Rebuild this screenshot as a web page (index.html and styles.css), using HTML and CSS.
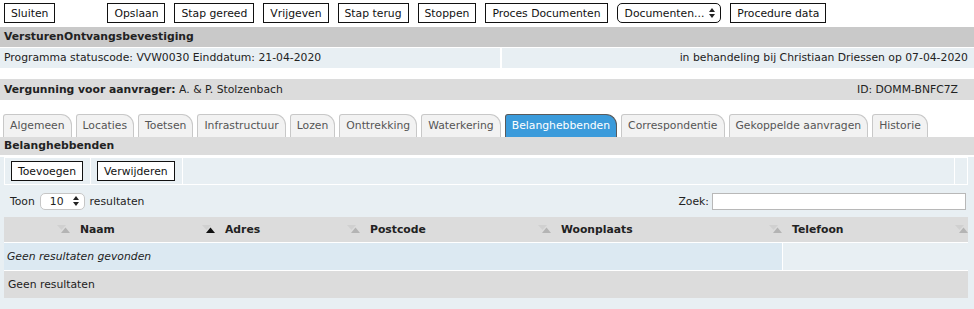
FILE: index.html
```html
<!DOCTYPE html>
<html>
<head>
<meta charset="utf-8">
<link rel="stylesheet" href="styles.css">
</head>
<body>
<div class="actions">
  <button class="btn">Sluiten</button>
  <div class="group">
    <button class="btn">Opslaan</button>
    <button class="btn">Stap gereed</button>
    <button class="btn">Vrijgeven</button>
    <button class="btn">Stap terug</button>
    <button class="btn">Stoppen</button>
    <button class="btn">Proces Documenten</button>
    <button class="btn select">Documenten... <svg class="updown" width="6" height="10" viewBox="0 0 6 10"><polygon points="0,4 6,4 3,0" fill="#222"/><polygon points="0,6 6,6 3,10" fill="#222"/></svg></button>
    <button class="btn">Procedure data</button>
  </div>
</div>

<div class="title-bar">VersturenOntvangsbevestiging</div>
<div class="status-row">
  <div class="status-left">Programma statuscode: VVW0030 Einddatum: 21-04-2020</div>
  <div class="status-right">in behandeling bij Christiaan Driessen op 07-04-2020</div>
</div>

<div class="applicant-bar">
  <div><b>Vergunning voor aanvrager:</b> A. &amp; P. Stolzenbach</div>
  <div class="applicant-id">ID: DOMM-BNFC7Z</div>
</div>

<div class="tabs">
  <div class="tab">Algemeen</div>
  <div class="tab">Locaties</div>
  <div class="tab">Toetsen</div>
  <div class="tab">Infrastructuur</div>
  <div class="tab">Lozen</div>
  <div class="tab">Onttrekking</div>
  <div class="tab">Waterkering</div>
  <div class="tab active">Belanghebbenden</div>
  <div class="tab">Correspondentie</div>
  <div class="tab">Gekoppelde aanvragen</div>
  <div class="tab">Historie</div>
</div>

<div class="section-bar">Belanghebbenden</div>

<div class="panel">
  <div class="panel-tools">
    <div class="tool-cell"><button class="btn">Toevoegen</button></div>
    <div class="tool-cell"><button class="btn">Verwijderen</button></div>
    <div class="tool-cell tool-fill"></div>
    <div class="tool-cell tool-end"></div>
  </div>

  <div class="table-controls">
    <div class="length">Toon <span class="len-select">10 <svg class="updown" width="6" height="10" viewBox="0 0 6 10"><polygon points="0,4 6,4 3,0" fill="#222"/><polygon points="0,6 6,6 3,10" fill="#222"/></svg></span> resultaten</div>
    <div class="search">Zoek: <span class="search-input"></span></div>
  </div>

  <table class="data">
    <thead>
      <tr>
        <th class="c0"><svg class="sort" width="13" height="8" viewBox="0 0 13 8"><polygon points="0,0 9,0 4.5,5" fill="#d0d0d0"/><polygon points="4,8 13,8 8.5,2.5" fill="#b4b4b4"/></svg></th>
        <th class="c1">Naam<svg class="sort" width="13" height="8" viewBox="0 0 13 8"><polygon points="0,0 9,0 4.5,5" fill="#d0d0d0"/><polygon points="4,8 13,8 8.5,2.5" fill="#111"/></svg></th>
        <th class="c2">Adres<svg class="sort" width="13" height="8" viewBox="0 0 13 8"><polygon points="0,0 9,0 4.5,5" fill="#d0d0d0"/><polygon points="4,8 13,8 8.5,2.5" fill="#b4b4b4"/></svg></th>
        <th class="c3">Postcode<svg class="sort" width="13" height="8" viewBox="0 0 13 8"><polygon points="0,0 9,0 4.5,5" fill="#d0d0d0"/><polygon points="4,8 13,8 8.5,2.5" fill="#b4b4b4"/></svg></th>
        <th class="c4">Woonplaats<svg class="sort" width="13" height="8" viewBox="0 0 13 8"><polygon points="0,0 9,0 4.5,5" fill="#d0d0d0"/><polygon points="4,8 13,8 8.5,2.5" fill="#b4b4b4"/></svg></th>
        <th class="c5">Telefoon<svg class="sort" width="13" height="8" viewBox="0 0 13 8"><polygon points="0,0 9,0 4.5,5" fill="#d0d0d0"/><polygon points="4,8 13,8 8.5,2.5" fill="#b4b4b4"/></svg></th>
      </tr>
    </thead>
    <tbody>
      <tr class="empty-row">
        <td colspan="5" class="empty">Geen resultaten gevonden</td>
        <td class="empty-side"></td>
      </tr>
      <tr class="info-row">
        <td colspan="6">Geen resultaten</td>
      </tr>
    </tbody>
  </table>
</div>
</body>
</html>
```

FILE: styles.css
```css
* { box-sizing: border-box; }
html, body { margin: 0; padding: 0; background: #fff; }
body {
  font-family: "DejaVu Sans", Verdana, sans-serif;
  font-size: 10.8px;
  color: #222;
  width: 974px;
}
.actions {
  display: flex;
  padding: 3px 4px 0;
}
.group {
  display: flex;
  gap: 9px;
  margin-left: 52px;
}
.btn {
  font: inherit;
  color: #111;
  background: #fff;
  border: 1px solid #111;
  border-radius: 0;
  height: 20px;
  padding: 0 6px;
  margin: 0;
  display: inline-flex;
  align-items: center;
}
.btn.select {
  border-radius: 5px;
  gap: 5px;
  padding: 0 5px 0 7px;
}
.updown { display: block; }
.title-bar {
  margin-top: 4px;
  height: 20px;
  line-height: 20px;
  background: #c9c9c9;
  font-weight: bold;
  padding: 0 4px;
  color: #222;
}
.status-row {
  display: flex;
  margin-top: 1px;
  height: 20px;
  line-height: 20px;
  background: #e8eff3;
}
.status-left {
  width: 502px;
  padding-left: 4px;
  border-right: 2px solid #fff;
}
.status-right {
  flex: 1;
  text-align: right;
  padding-right: 6px;
}
.applicant-bar {
  margin-top: 11px;
  height: 21px;
  background: #dcdcdc;
  display: flex;
  justify-content: space-between;
  align-items: center;
  padding: 0 16px 0 4px;
}
.tabs {
  display: flex;
  gap: 4px;
  padding: 13px 0 0 3px;
  height: 37px;
  align-items: flex-end;
}
.tab {
  height: 23px;
  line-height: 22px;
  padding: 0 6px;
  background: #f2f2f2;
  border: 1px solid #c8c8c8;
  border-bottom: none;
  border-radius: 3px 11px 0 0;
  color: #555;
}
.tab.active {
  background: #3b9bdb;
  border-color: #5a5a5a;
  color: #fff;
}
.section-bar {
  height: 18px;
  line-height: 18px;
  background: #dcdcdc;
  font-weight: bold;
  padding: 0 4px;
}
.panel {
  margin-top: 2px;
  background: #e8eff3;
  padding: 0 6px 13px 4px;
}
.panel-tools {
  display: flex;
  height: 28px;
  border: 1px solid #fff;
}
.tool-cell {
  display: flex;
  align-items: center;
  padding: 0 6px;
  border-right: 1px solid #fff;
}
.tool-cell:first-child { width: 86px; }
.tool-cell:nth-child(2) { width: 92px; }
.tool-cell .btn { height: 20px; padding: 0 6px; }
.tool-fill { flex: 1; }
.tool-end { width: 8px; border-right: none; }
.table-controls {
  display: flex;
  justify-content: space-between;
  align-items: center;
  height: 32px;
  padding: 0 2px 0 6px;
}
.length { display: flex; align-items: center; gap: 5px; }
.len-select {
  display: inline-flex;
  align-items: center;
  gap: 9px;
  height: 17px;
  padding: 0 5px 0 9px;
  background: #fff;
  border: 1px solid #c6c6c6;
  border-radius: 5px;
}
.search { display: flex; align-items: center; gap: 3px; }
.search-input {
  display: block;
  width: 254px;
  height: 17px;
  background: #fff;
  border: 1px solid #b8b8b8;
}
.data {
  width: 964px;
  border-collapse: collapse;
  table-layout: fixed;
}
.data th {
  background: #dcdcdc;
  height: 25px;
  text-align: left;
  font-weight: bold;
  padding: 0 0 0 10px;
  color: #222;
  position: relative;
}
.data th .sort {
  position: absolute;
  right: 0;
  top: 8px;
}
.c0 { width: 66px; }
.c1 { width: 145px; }
.c2 { width: 145px; }
.c3 { width: 191px; }
.c4 { width: 231px; }
.c5 { width: 186px; }
.data td { padding: 0 0 0 3px; }
.empty-row td {
  height: 28px;
  border-top: 1px solid #fff;
  border-bottom: 1px solid #fff;
}
.empty {
  background: #dce9f2;
  font-style: italic;
  border-right: 1px solid #fff;
}
.empty-side { background: #e8eff3; }
.info-row td {
  height: 28px;
  background: #dcdcdc;
  padding-left: 4px;
}
```
